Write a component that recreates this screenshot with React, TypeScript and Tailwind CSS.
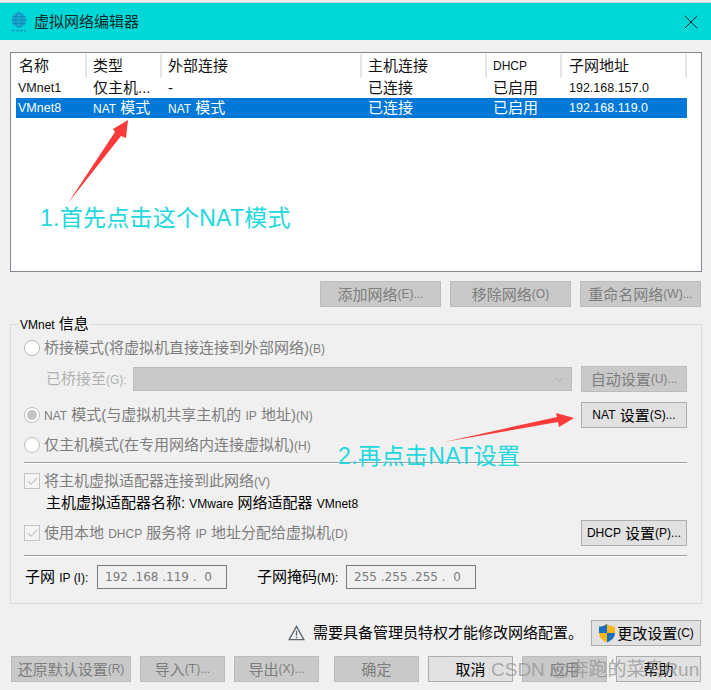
import React from 'react';
import { X, ChevronDown, Check } from 'lucide-react';

const UI_FONT = 'font-["Liberation_Sans","Noto_Sans_CJK_SC",sans-serif]';

const columns = [
  { label: '名称', width: 'w-[71px]', pad: 'pl-[2px]', head: 'pl-[3px]' },
  { label: '类型', width: 'w-[75px]', pad: 'pl-[6px]', head: 'pl-[6px]' },
  { label: '外部连接', width: 'w-[200px]', pad: 'pl-[6px]', head: 'pl-[6px]' },
  { label: '主机连接', width: 'w-[125px]', pad: 'pl-[6px]', head: 'pl-[6px]' },
  { label: 'DHCP', width: 'w-[75px]', pad: 'pl-[6px]', head: 'pl-[6px]', small: true },
  { label: '子网地址', width: 'w-[125px]', pad: 'pl-[7px]', head: 'pl-[7px]' },
];

const rows = [
  ['VMnet1', '仅主机...', '-', '已连接', '已启用', '192.168.157.0'],
  ['VMnet8', 'NAT 模式', 'NAT 模式', '已连接', '已启用', '192.168.119.0'],
];

// Latin runs render smaller than the CJK text around them
const L = ({ children }: { children: React.ReactNode }) => <span className="text-[12px]">{children}</span>;

interface BtnProps {
  w: string;
  disabled?: boolean;
  children: React.ReactNode;
}

const Btn = ({ w, disabled, children }: BtnProps) => (
  <button
    className={`${w} h-[26px] shrink-0 flex items-center justify-center text-[15px] leading-none whitespace-nowrap border ${
      disabled ? 'bg-[#c9c9c9] border-[#bcbcbc] text-[#7d7d7d]' : 'bg-[#e1e1e1] border-[#adadad] text-black'
    }`}
  >
    {children}
  </button>
);

const Radio = ({ checked }: { checked?: boolean }) => (
  <span className="w-[16px] h-[16px] shrink-0 rounded-full border border-[#bcbcbc] bg-white flex items-center justify-center">
    {checked && <span className="w-[10px] h-[10px] rounded-full bg-[#c4c4c4]" />}
  </span>
);

const Tick = () => (
  <span className="w-[16px] h-[16px] shrink-0 border border-[#c4c4c4] bg-[#f4f4f4] flex items-center justify-center">
    <Check className="w-[13px] h-[13px] text-[#c4c4c4]" strokeWidth={2} />
  </span>
);

const Field = ({ w, value }: { w: string; value: string }) => (
  <div className={`${w} h-[24px] border border-[#7a7a7a] bg-[#f0f0f0] flex items-center pl-[7px] text-[12px] text-[#7b7b7b] whitespace-pre font-["DejaVu_Sans",sans-serif]`}>
    {value}
  </div>
);

export default function App() {
  return (
    <div className={`relative w-[711px] h-[690px] overflow-hidden bg-[#f0f0f0] text-black ${UI_FONT}`}>
      {/* Title bar */}
      <div className="mt-[2px] h-[38px] bg-[#00d7d7] flex items-center pl-[10px] pr-[8px] border-t border-[#d8d8d8]">
        <svg viewBox="0 0 18 20" className="w-[18px] h-[20px] shrink-0">
          <circle cx="9" cy="8" r="7.500" fill="#17a9d2" />
          <g fill="none" stroke="#0c8cb8" strokeWidth="1">
            <ellipse cx="9" cy="8" rx="3.400" ry="7.500" />
            <path d="M1.500 8h15M2.800 4.500h12.400M2.800 11.500h12.400" />
          </g>
          <path d="M2 18.500h3M6 18.500h3M10 18.500h3M14 18.500h2" stroke="#1296ba" strokeWidth="1.500" />
        </svg>
        <span className="ml-[6px] text-[15px] leading-none text-[#0b2b2b]">虚拟网络编辑器</span>
        <X className="ml-auto w-[24px] h-[24px] text-[#0a2a2a]" strokeWidth={1} />
      </div>

      {/* Network list */}
      <div className="ml-[10px] mr-[9px] mt-[12px] h-[220px] border border-[#85858f] bg-white pl-[5px] pt-[1px]">
        <div className="flex h-[24px]">
          {columns.map((c) => (
            <div
              key={c.label}
              className={`${c.width} ${c.head} h-[24px] border-r-2 border-[#e5e5e5] flex items-center whitespace-nowrap text-[#111] ${c.small ? 'text-[12px] text-[#1a1a50]' : 'text-[15px]'}`}
            >
              {c.label}
            </div>
          ))}
        </div>
        {rows.map((row, i) => (
          <div key={row[0]} className={`flex h-[20px] w-[671px] items-center ${i === 1 ? 'bg-[#0078d7] text-white' : 'text-[#111]'}`}>
            {row.map((cell, j) => (
              <div
                key={j}
                className={`${columns[j].width} ${columns[j].pad} whitespace-nowrap ${
                  j === 0 || j === 5 ? 'text-[12.500px]' : 'text-[15px]'
                }`}
              >
                {cell.startsWith('NAT') ? (
                  <>
                    <L>NAT</L> 模式
                  </>
                ) : (
                  cell
                )}
              </div>
            ))}
          </div>
        ))}
      </div>

      {/* List actions */}
      <div className="mt-[9px] pr-[10px] flex justify-end gap-[9px]">
        <Btn w="w-[121px]" disabled>添加网络<L>(E)...</L></Btn>
        <Btn w="w-[121px]" disabled>移除网络<L>(O)</L></Btn>
        <Btn w="w-[121px]" disabled>重命名网络<L>(W)...</L></Btn>
      </div>

      {/* VMnet info group */}
      <div className="relative ml-[10px] mr-[9px] mt-[17px] h-[280px] border border-[#dcdcdc] pl-[13px] pr-[14px]">
        <span className="absolute left-[8px] -top-[11px] px-[1px] bg-[#f0f0f0] text-[15px] leading-[20px]">
          <L>VMnet</L> 信息
        </span>

        <div className="flex items-center gap-[4px] h-[20px] mt-[13px] text-[15px] text-[#7d7d7d] whitespace-nowrap">
          <Radio />
          <span>桥接模式(将虚拟机直接连接到外部网络)<L>(B)</L></span>
        </div>

        <div className="flex items-center mt-[8px] h-[26px]">
          <span className="w-[109px] pl-[22px] text-[15px] text-[#b0b0b0] whitespace-nowrap">已桥接至<L>(G):</L></span>
          <div className="w-[439px] h-[24px] bg-[#c9c9c9] border border-[#bcbcbc] flex items-center justify-end pr-[5px]">
            <ChevronDown className="w-[13px] h-[13px] text-[#9a9a9a]" strokeWidth={1.2} />
          </div>
          <div className="ml-[9px]">
            <Btn w="w-[106px]" disabled>自动设置<L>(U)...</L></Btn>
          </div>
        </div>

        <div className="flex items-center justify-between mt-[10px] h-[26px] text-[15px] text-[#7d7d7d] whitespace-nowrap">
          <div className="flex items-center gap-[4px]">
            <Radio checked />
            <span><L>NAT</L> 模式(与虚拟机共享主机的 <L>IP</L> 地址)<L>(N)</L></span>
          </div>
          <Btn w="w-[106px]"><L>NAT</L>&nbsp;设置<L>(S)...</L></Btn>
        </div>

        <div className="flex items-center gap-[4px] h-[20px] mt-[7px] text-[15px] text-[#7d7d7d] whitespace-nowrap">
          <Radio />
          <span>仅主机模式(在专用网络内连接虚拟机)<L>(H)</L></span>
        </div>

        <div className="mt-[7px] h-[2px] border-t border-[#a0a0a0] border-b-[#ffffff] border-b" />

        <div className="flex items-center gap-[4px] h-[20px] mt-[7px] text-[15px] text-[#7d7d7d] whitespace-nowrap">
          <Tick />
          <span>将主机虚拟适配器连接到此网络<L>(V)</L></span>
        </div>

        <div className="mt-[2px] h-[20px] pl-[22px] text-[15px] leading-[20px] whitespace-nowrap">
          主机虚拟适配器名称: <L>VMware</L> 网络适配器 <L>VMnet8</L>
        </div>

        <div className="flex items-center justify-between mt-[7px] h-[26px] text-[15px] text-[#7d7d7d] whitespace-nowrap">
          <div className="flex items-center gap-[4px]">
            <Tick />
            <span>使用本地 <L>DHCP</L> 服务将 <L>IP</L> 地址分配给虚拟机<L>(D)</L></span>
          </div>
          <Btn w="w-[106px]"><L>DHCP</L>&nbsp;设置<L>(P)...</L></Btn>
        </div>

        <div className="mt-[9px] h-[2px] border-t border-[#a0a0a0] border-b-[#ffffff] border-b" />

        <div className="flex items-center mt-[8px] h-[24px] text-[15px] whitespace-nowrap">
          <span className="w-[73px] pl-[1px]">子网 <L>IP (I):</L></span>
          <Field w="w-[130px]" value="192 .168 .119 .  0" />
          <span className="ml-[30px] w-[89px]">子网掩码<L>(M):</L></span>
          <Field w="w-[130px]" value="255 .255 .255 .  0" />
        </div>
      </div>

      {/* Admin notice */}
      <div className="mt-[16px] pr-[10px] flex items-center justify-end h-[26px]">
        <svg viewBox="0 0 18 17" className="w-[17px] h-[16px] shrink-0 mr-[8px]">
          <path d="M9 1.500 16.800 15.500H1.200Z" fill="none" stroke="#5c6670" strokeWidth="1.400" />
          <path d="M9 6v5.500M9 12.500v1.500" stroke="#5c6670" strokeWidth="1.400" />
        </svg>
        <span className="text-[15px] whitespace-nowrap mr-[8px]">需要具备管理员特权才能修改网络配置。</span>
        <Btn w="w-[110px]">
          <svg viewBox="0 0 18 20" className="w-[18px] h-[20px] shrink-0 mr-[1px]">
            <path d="M9 1C6.500 3 4 3.500 1 3.500V10c0 4.500 3.500 7.500 8 9.500z" fill="#f8b51c" />
            <path d="M1 3.500C4 3.500 6.500 3 9 1v9H1z" fill="#1a6fc4" />
            <path d="M9 10h8c0 4.500-3.500 7.500-8 9.500z" fill="#1a6fc4" />
            <path d="M9 1c2.500 2 5 2.500 8 2.500V10H9z" fill="#f8b51c" />
          </svg>
          更改设置<L>(C)</L>
        </Btn>
      </div>

      {/* Dialog buttons */}
      <div className="mt-[10px] pl-[11px] pr-[10px] flex">
        <Btn w="w-[120px]" disabled>还原默认设置<L>(R)</L></Btn>
        <div className="ml-[9px]"><Btn w="w-[85px]" disabled>导入<L>(T)...</L></Btn></div>
        <div className="ml-[9px]"><Btn w="w-[85px]" disabled>导出<L>(X)...</L></Btn></div>
        <div className="ml-[15px]"><Btn w="w-[85px]" disabled>确定</Btn></div>
        <div className="ml-[9px]"><Btn w="w-[85px]">取消</Btn></div>
        <div className="ml-[9px]"><Btn w="w-[85px]" disabled>应用</Btn></div>
        <div className="ml-[9px]"><Btn w="w-[85px]">帮助</Btn></div>
      </div>

      {/* Red callout arrows */}
      <svg viewBox="0 0 711 690" className="absolute inset-0 w-[711px] h-[690px] pointer-events-none">
        <polygon points="68,203 115,132 113,129 128,120 126,138 121,136" fill="#fb3a3a" />
        <polygon points="444,442 557,417 556,413 574,418 559,427 558,422" fill="#fb3a3a" />
      </svg>

      {/* Callout captions */}
      <span className='absolute left-[40px] top-[201px] text-[23px] leading-[34px] tracking-[0.25px] whitespace-nowrap text-[#22d8de] font-["Liberation_Sans","Noto_Sans_CJK_SC",sans-serif]'>
        1.首先点击这个NAT模式
      </span>
      <span className='absolute left-[338px] top-[439px] text-[23px] leading-[34px] tracking-[0.4px] whitespace-nowrap text-[#22d8de] font-["Liberation_Sans","Noto_Sans_CJK_SC",sans-serif]'>
        2.再点击NAT设置
      </span>

      {/* Watermark */}
      <span className='absolute left-[491px] top-[657px] text-[19px] leading-[26px] whitespace-nowrap text-[#8f8f8f]/70 font-["Liberation_Sans","Noto_Sans_CJK_SC",sans-serif]'>
        CSDN @奔跑的菜鸟Run
      </span>
    </div>
  );
}
